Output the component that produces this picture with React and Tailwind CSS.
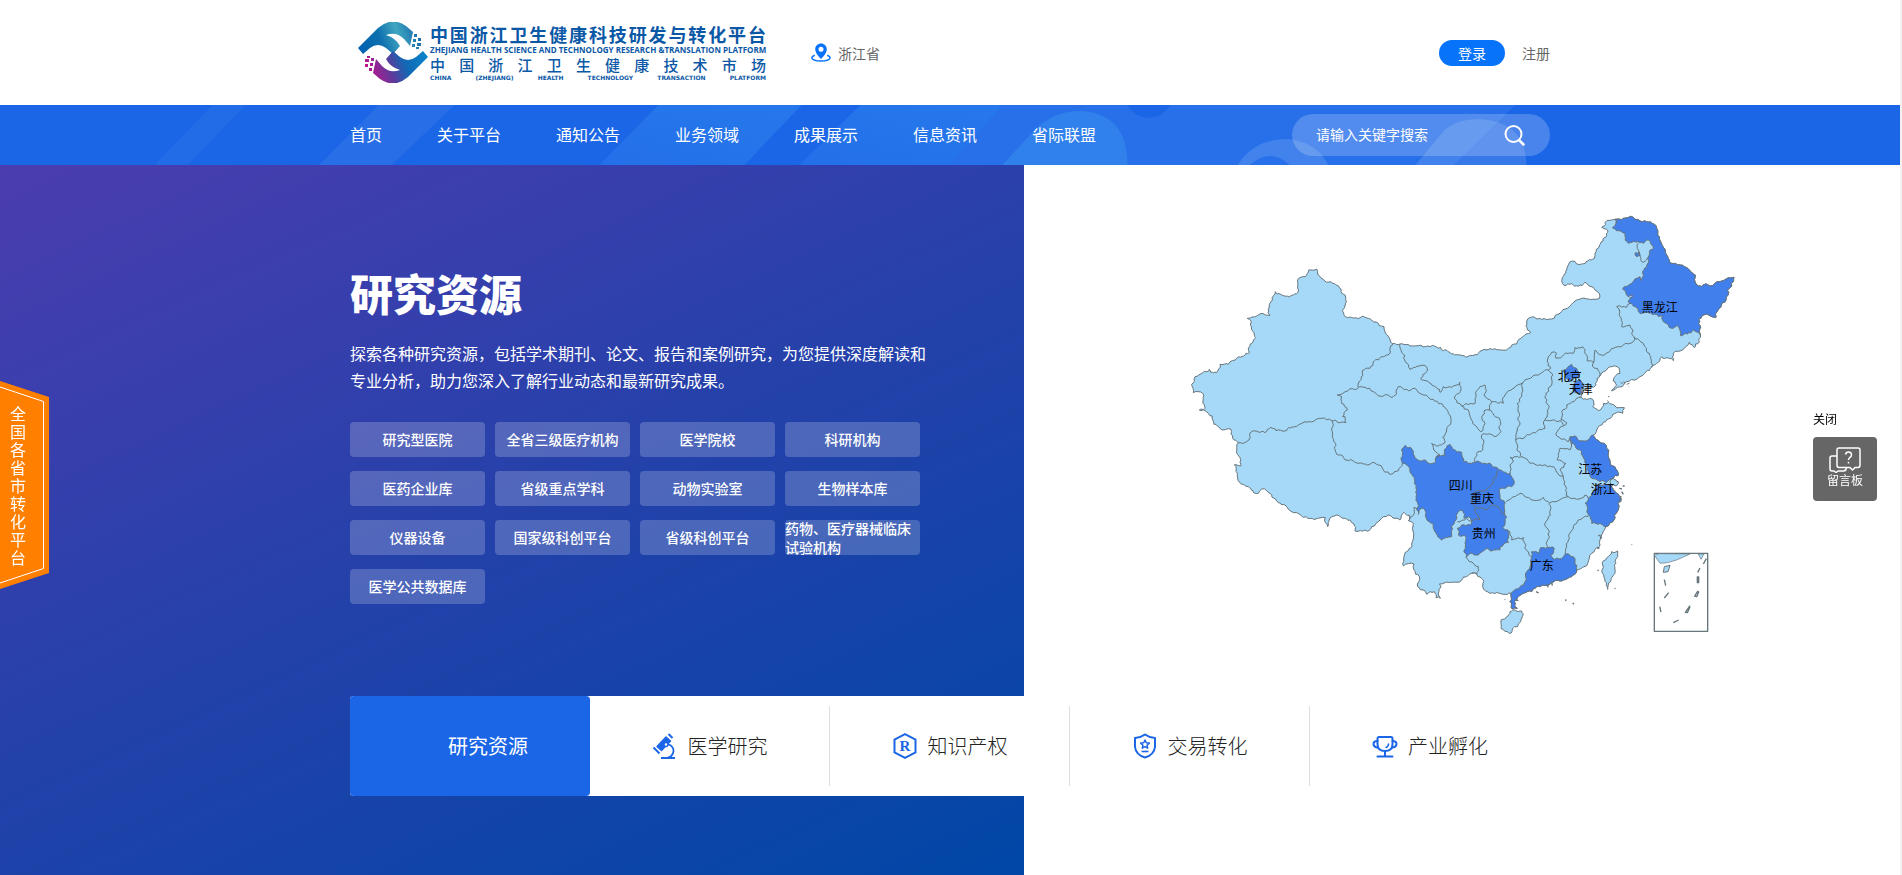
import React from 'react';

const OFFSETS = { A: [0, 0], B: [930, 0], C: [0, 690], D: [930, 690] };

/* Reads "x,y x,y ..." given in one of the four map tiles. */
function arc(tile, text) {
  const [ox, oy] = OFFSETS[tile];
  return text
    .trim()
    .split(/\s+/)
    .map((pair) => {
      const [x, y] = pair.split(',').map(Number);
      return [x + ox, y + oy];
    });
}

function noise(a, b) {
  const s = Math.sin(a[0] * 12.9898 + a[1] * 78.233 + b[0] * 37.719 + b[1] * 4.581) * 43758.5453;
  return s - Math.floor(s) - 0.5;
}

/* Splits a border segment so that it reads as a natural coast line. */
function split(a, b, out) {
  const dx = b[0] - a[0];
  const dy = b[1] - a[1];
  const length = Math.hypot(dx, dy);
  if (length > 9) {
    const forward = a[0] < b[0] || (a[0] === b[0] && a[1] < b[1]);
    const n = forward ? noise(a, b) : -noise(b, a);
    const k = (n * Math.min(length * 0.5, 9)) / length;
    const mid = [Math.round(((a[0] + b[0]) / 2 - dy * k) * 10) / 10, Math.round(((a[1] + b[1]) / 2 + dx * k) * 10) / 10];
    split(a, mid, out);
    split(mid, b, out);
  } else {
    out.push(b);
  }
}

function toPath(points, closed) {
  const out = [points[0]];
  for (let i = 1; i < points.length; i += 1) split(points[i - 1], points[i], out);
  if (closed) split(points[points.length - 1], points[0], out);
  return 'M' + out.map((p) => p.join(' ')).join('L') + (closed ? 'Z' : '');
}

const northWest = arc('A', '125,583 133,575 135,560 158,548 170,545 178,538 182,547 200,548 206,537 210,523 235,523 262,503 298,488 301,462 308,458 317,443 309,425 304,395 292,385 320,378 342,372 360,376 355,358 367,330 376,305 392,313 425,316 443,308 443,270 450,263 465,260 476,240 500,237 503,252 524,273 548,280 566,288 573,305 587,322 585,348 577,362 582,376 605,382 645,382 665,390 688,407 702,410 712,435 728,461 750,462 790,468 848,466 872,472 880,482 900,487 920,494 942,497 948,502 975,494');
const north = arc('B', '90,476 145,475 170,462 188,440 212,428 198,408 205,385 220,380 245,388 275,387 300,370 322,355 345,333 375,325 418,325 420,318 400,292 375,277 355,289 335,281 312,286 305,272 320,240 337,213 365,222 403,205 405,190 418,168 440,137 440,118 425,112 435,98 450,91');
const heilongjiangCoast = arc('B', '465,88 490,85 520,82 548,95 572,96 590,115 598,140 610,172 620,195 628,217 660,225 690,242 706,255 708,282 716,288 750,288 780,275 822,262 812,280 814,290 802,300 798,330 782,352 768,382 740,372 716,388 722,412 722,438');
const bohai = arc('B', '718,455 706,462 703,473 688,457 678,470 668,480 640,490 640,512 605,500 590,520 575,532 540,560 530,568 500,575 455,603 470,585 460,570 480,550 478,535 455,530 418,560 410,575 400,592 385,592 370,600 362,622 398,628 398,650 415,662 430,640 445,637 465,648 493,653 488,670 470,668 430,697 410,720');
const jiangsuCoast = arc('D', '400,45 433,70 445,100 452,135 472,152 476,165 460,175');
const shanghai = arc('D', '475,185 470,197');
const zhejiangCoast = arc('D', '452,193 460,210 475,222 483,235 474,250 472,275 462,300 438,320');
const fujianCoast = arc('D', '425,345 420,375 405,388 388,415 372,440');
const guangdongCoast = arc('D', '350,450 335,470 310,480 285,482 270,492 240,500 215,515 175,530 163,545 172,565 157,567 150,545 153,520');
const south = arc('D', '130,523 90,520 68,500 70,480 50,462 35,460');
const southWest = arc('C', '935,480 905,487 885,488 868,492 871,535 858,533 853,515 830,523 822,510 803,500 808,470 796,462 792,432 760,438 762,410 785,372 791,340 790,310 775,302 778,285 762,277 750,300 735,295 715,285 690,300 665,320 658,331 615,333 612,312 600,300 555,287 538,300 533,320 526,293 495,298 460,292 430,278 405,255 385,248 350,212 335,207 325,220 295,200 268,186 262,160 253,135 272,138 272,118 260,98 265,68');
const west = arc('A', '248,745 243,718 210,714 192,703 187,678 165,662 148,660 165,655 158,610 130,608');

const mainland = [northWest, north, heilongjiangCoast, bohai, jiangsuCoast, shanghai, zhejiangCoast, fujianCoast, guangdongCoast, south, southWest, west].flat();

const hainan = arc('D', '185,573 150,575 123,600 123,625 148,640 173,620 187,590');
const taiwan = arc('D', '473,393 455,395 428,435 427,460 443,508 452,485 465,450 473,410');

const darkRegions = [
  [...heilongjiangCoast, ...arc('B', '700,420 662,437 650,405 635,415 625,405 610,395 608,378 560,365 540,370 525,350 510,340 505,332 520,318 505,320 488,298 540,260 543,272 548,250 560,232 562,205 580,175 575,165 560,150 550,160 505,160 495,150 495,130 470,122 457,113 468,100')],
  [...jiangsuCoast, ...arc('D', '440,187 420,185 390,165 375,120 365,95 345,75 330,60 330,50 345,48 352,58 385,60')],
  [...zhejiangCoast, ...arc('D', '420,310 395,310 385,285 375,250 385,235 400,215 410,192 430,195')],
  [...guangdongCoast, ...arc('D', '180,500 195,485 200,455 213,430 215,395 235,400 240,385 262,383 283,385 272,405 283,418 310,410 315,403 340,410 345,425')],
  [
    ...arc('C', '757,130 755,92 765,76 782,82 793,108 815,123 825,120 840,132 855,128 858,110 885,108 888,85 900,73 910,88 935,97 940,125 955,130 975,127'),
    ...arc('D', '75,130 115,148 150,160 163,185 155,200 120,205 120,235 135,250 140,290 128,322 143,330 145,368 120,390 100,390 80,385 55,405 30,400 18,412 12,390 15,370 15,347'),
    ...arc('C', '925,345 922,325 935,315 960,315 965,305 960,292 942,295 938,272 925,275 918,300 903,318 905,350 875,360 862,345 848,310 830,297 828,278 815,265 805,283 800,265 798,230 793,178 775,140'),
  ],
  arc('B', '335,523 350,535 355,560 330,575 315,560 310,540'),
  arc('B', '355,570 368,580 362,612 345,608 338,590'),
  arc('B', '526,188 538,186 540,196 530,200'),
];

const borders = [
  [...arc('C', '265,68 290,65 305,35 345,38 362,22 378,32 405,33 440,20'), ...arc('A', '465,695 515,685 545,692 562,697 588,698 585,680 578,680 592,660 575,640 575,620 562,615 625,593 637,542 660,535 670,515 700,500 718,492 722,468 728,461')],
  [...arc('A', '545,692 548,710 547,740 553,775'), ...arc('C', '560,103 580,112 610,123 640,132 685,135 705,157 722,163 745,152 757,130')],
  [...arc('A', '625,593 645,592 670,605 680,613 725,622 740,612 745,590 770,598 795,595 820,615 850,628 885,652 895,670 903,695 890,720 878,742 883,760 865,768 845,760 850,772 870,795'), ...arc('C', '858,110')],
  [...arc('A', '750,462 765,497 765,515 780,538 825,527 830,545 812,565 845,585 870,607 880,590 905,592 930,577 933,595 913,625 935,648'), ...arc('B', '45,640 48,615 60,590 75,585 78,605 72,615 95,635 130,640 133,620 165,590 188,578 225,555 265,540')],
  [...arc('A', '935,648 955,660 968,700 992,725'), ...arc('B', '70,710 75,700 65,680 72,662 88,660 95,635')],
  [...arc('B', '88,660 120,690 123,725 100,738 65,735'), ...arc('D', '70,60 68,90 50,100 45,125')],
  [...arc('B', '188,578 185,610 172,640 178,670 172,720 167,748'), ...arc('D', '172,75 185,110 150,112 160,125 150,135 150,160')],
  arc('B', '265,540 278,555 275,585 255,620 268,650 255,690 255,715 215,730 167,750'),
  arc('B', '255,690 300,692 312,706'),
  arc('B', '265,540 272,535 262,515 275,487 290,490 288,505 310,495 340,490 345,473 368,470 375,490 382,513 402,515 405,480 425,495 460,475 520,455 522,440 515,430 510,405 485,410 478,360 470,350 500,352 510,340'),
  arc('B', '402,515 397,525 412,535 418,560'),
  arc('B', '522,440 550,460 568,490 575,532'),
  arc('B', '535,160 535,180 545,215 562,205'),
  arc('B', '465,88 468,100'),
  arc('B', '362,622 320,645 305,665 303,690 320,698 300,712 288,730 300,745 325,755 330,742'),
  arc('D', '185,110 210,130 270,138 300,168 310,172 318,225 325,230 270,248'),
  arc('D', '310,172 300,150 318,130 292,120 300,85 330,90 335,75 330,60'),
  arc('D', '138,245 160,230 180,220 200,232 240,240 250,232 268,248 272,285 255,310 265,345 265,383'),
  arc('D', '325,230 350,238 375,225 385,235'),
  arc('D', '385,290 355,300 340,320 325,360 318,385 315,403'),
  arc('D', '143,330 155,360 190,352 195,385 213,410'),
  arc('D', '18,412 28,425 55,440 50,462 35,460'),
  arc('C', '775,302 790,285 792,262 800,265'),
  arc('D', '-8,305 20,295 35,302 60,298 55,285 45,275 50,262 75,270 100,255 115,260 125,280 137,285'),
  arc('D', '50,262 35,240 45,215 75,212 95,195 110,170 115,148'),
  arc('D', '460,175 450,185 452,193'),
];

const labels = [
  ['黑龙江', 1529, 353],
  ['北京', 1259, 560],
  ['天津', 1292, 600],
  ['江苏', 1321, 839],
  ['浙江', 1358, 899],
  ['四川', 932, 886],
  ['重庆', 996, 926],
  ['贵州', 1001, 1031],
  ['广东', 1175, 1128],
];

function ChinaMap() {
  return (
    <svg viewBox="0 0 1872 1380" className="w-[624px] max-w-full" role="img" aria-label="中国地图">
      <g stroke="#66747b" strokeWidth="3" strokeLinejoin="round" fill="#a5d9f7">
        <path d={toPath(mainland, true)} />
        <path d={toPath(hainan, true)} />
        <path d={toPath(taiwan, true)} />
        <g fill="#417fec">
          {darkRegions.map((points, i) => (
            <path key={i} d={toPath(points, true)} />
          ))}
        </g>
        <g fill="none">
          {borders.map((points, i) => (
            <path key={i} d={toPath(points, false)} />
          ))}
        </g>
        <g transform="translate(930 690)">
          <rect x="583" y="400" width="160" height="234" fill="none" strokeWidth="4" />
          <path d="M583 406L597 401L690 402L650 420L622 428L600 430ZM715 402L732 402L723 418Z" strokeWidth="2" />
          <path d="M613 440L630 436L624 455L610 457Z" />
          <g fill="none" strokeWidth="4">
            <path d="M739 416L730 432M720 444L713 457M712 471V488H716V471ZM713 514L704 528L710 530L716 516ZM690 557L676 577L682 578L690 560M656 600L640 608M599 560L603 576M626 518L613 534M613 479L617 497" />
          </g>
          <path d="M478 205l8 2M488 198l6 0M478 228l7 3M476 240l8 -4M262 492l2 10M275 485l2 12M228 515l8 4M165 540l10 2M412 450l4 2M515 373l1 1M464 504l2 2M317 538l1 5M338 549l4 4M134 538l2 1M415 345l8 4M412 382l6 4M485 215l5 8M420 352l6 2" strokeWidth="4" />
        </g>
        <path d="M1420 575l6 4M1430 583l8 -3M1437 590l1 1M1374 620l4 0M1372 632l4 3M1412 578l6 2" />
      </g>
      <g fill="#000" fontSize="36" textAnchor="middle" className="font-['Noto_Sans_CJK_SC',sans-serif]">
        {labels.map(([name, x, y]) => (
          <text key={name} x={x} y={y + 13}>{name}</text>
        ))}
      </g>
    </svg>
  );
}

function Emblem() {
  const shape = 'M0 26L20 6Q34 -6 48 4L55 10L52 24L46 17Q38 9 28 13Q38 16 42 24L35 32L28 26Q20 20 12 26L5 32Z';
  const dots = 'M56 12h3v3h-3zM60 16h3v3h-3zM55 17h3v3h-3zM59 21h4v3h-4zM54 22h3v3h-3zM58 25h3v2h-3z';
  return (
    <svg viewBox="0 0 70 61" className="h-[61px] w-[70px] shrink-0" aria-hidden="true">
      <defs>
        <linearGradient id="emblem-top" x1="0" y1="0.6" x2="1" y2="0.4">
          <stop offset="0" stopColor="#0062b1" />
          <stop offset="0.35" stopColor="#0e6fae" />
          <stop offset="0.65" stopColor="#3fa5c0" />
          <stop offset="1" stopColor="#1465ac" />
        </linearGradient>
        <linearGradient id="emblem-bottom" x1="0" y1="0.6" x2="1" y2="0.4">
          <stop offset="0" stopColor="#0a83c9" />
          <stop offset="0.35" stopColor="#1268b4" />
          <stop offset="0.6" stopColor="#5a3c9c" />
          <stop offset="1" stopColor="#c8108c" />
        </linearGradient>
      </defs>
      <path d={shape + dots} fill="url(#emblem-top)" />
      <path d={shape + dots} fill="url(#emblem-bottom)" transform="rotate(180 35 30.5)" />
    </svg>
  );
}

function NavPattern() {
  return (
    <svg viewBox="0 0 1901 60" preserveAspectRatio="xMidYMid slice" className="h-[60px] w-full [grid-area:1/1]" aria-hidden="true">
      <defs>
        <linearGradient id="nav-fade" x1="0" x2="1" y1="1" y2="0">
          <stop offset="0" stopColor="#3a8cf4" stopOpacity="0.25" />
          <stop offset="1" stopColor="#2f8af0" stopOpacity="0.5" />
        </linearGradient>
      </defs>
      <path d="M213 0H246L188 60H155Z" fill="#fff" opacity="0.04" />
      <path d="M379 0H455L392 60H320Z" fill="#fff" opacity="0.06" />
      <path d="M659 0H802L745 60H600Z" fill="url(#nav-fade)" />
      <path d="M861 0H1003L951 60H800Z" fill="url(#nav-fade)" />
      <path d="M1003 0H1128Q1136 13 1149 13Q1162 13 1171 0H1516L1454 60H951Z" fill="#3a80f0" opacity="0.4" />
      <path d="M1003 60L1035 25Q1054 6 1080 6Q1128 8 1128 60Z" fill="#3f9af0" opacity="0.4" />
      <path d="M1238 60Q1255 34 1287 34Q1316 36 1329 60H1290Q1272 42 1250 60Z" fill="#fff" opacity="0.13" />
      <path d="M1416 60L1445 25Q1458 14 1479 14Q1526 16 1527 60Z" fill="#fff" opacity="0.13" />
    </svg>
  );
}

function MicroscopeIcon() {
  return (
    <svg viewBox="0 0 26 26" className="size-[26px]" aria-hidden="true" fill="none" stroke="#1b66e6">
      <path d="M14 4L18.500 8L9.500 17.500L5 13.500Z" fill="#1b66e6" strokeWidth="1.500" strokeLinejoin="round" />
      <path d="M16.500 1L20.500 5" strokeWidth="2" />
      <path d="M1.500 14.500L7.500 20.500" strokeWidth="2" />
      <path d="M16 11Q22 13.500 21.500 18.500Q20.500 24 15 25" strokeWidth="1.800" />
      <path d="M9 25H23" strokeWidth="2" />
      <circle cx="14" cy="11.500" r="2" fill="#fff" strokeWidth="1.500" />
    </svg>
  );
}

function RegisteredIcon() {
  return (
    <svg viewBox="0 0 26 26" className="size-[26px]" aria-hidden="true">
      <path d="M13 1.200L23.500 6.500V19.500L13 24.800L2.500 19.500V6.500Z" fill="none" stroke="#1b66e6" strokeWidth="2" />
      <text x="13" y="18" textAnchor="middle" fontSize="15" fill="#1b66e6" className="font-['Liberation_Serif',serif] font-bold">R</text>
    </svg>
  );
}

function ShieldIcon() {
  return (
    <svg viewBox="0 0 26 26" className="size-[26px]" aria-hidden="true" fill="none" stroke="#1b66e6" strokeLinejoin="round">
      <path d="M13 1.500Q17 4.500 23 5V14Q22 22 13 24.500Q4 22 3 14V5Q9 4.500 13 1.500Z" strokeWidth="2" />
      <path d="M13 7L14.300 9.800L17.300 10.100L15 12.200L15.700 15.200L13 13.700L10.300 15.200L11 12.200L8.700 10.100L11.700 9.800Z" strokeWidth="1.500" />
      <path d="M9.500 18.500H16.500" strokeWidth="1.600" />
    </svg>
  );
}

function TrophyIcon() {
  return (
    <svg viewBox="0 0 26 26" className="size-[26px]" aria-hidden="true" fill="none" stroke="#1b66e6" strokeWidth="2" strokeLinecap="round" strokeLinejoin="round">
      <path d="M7 4H19Q20.500 4 20.500 6V11Q20.500 18 13 18Q5.500 18 5.500 11V6Q5.500 4 7 4Z" />
      <path d="M5.500 8Q1.500 8 1.500 11Q2 14.500 6 14.500M20.500 8Q24.500 8 24.500 11Q24 14.500 20 14.500M13 18V23M5.500 23.500H20.500" />
      <path d="M16.500 11Q16.500 13.500 14 14.500" strokeWidth="1.500" />
    </svg>
  );
}

function PinIcon() {
  return (
    <svg viewBox="0 0 20 19" className="h-[19px] w-5" aria-hidden="true">
      <path fillRule="evenodd" fill="#0673fa" d="M10 0.500C13.300 0.500 15.800 3 15.800 6.200C15.800 9 13.500 12.500 10 16C6.500 12.500 4.200 9 4.200 6.200C4.200 3 6.700 0.500 10 0.500ZM10 3.700A2.500 2.500 0 1 0 10 8.700A2.500 2.500 0 1 0 10 3.700Z" />
      <path d="M3.800 12.200Q0.800 13.500 0.800 14.800Q1.500 17.800 10 18Q18.500 17.800 19.200 14.800Q19.200 13.500 16.200 12.200" fill="none" stroke="#0673fa" strokeWidth="1.500" />
    </svg>
  );
}

const navItems = ['首页', '关于平台', '通知公告', '业务领域', '成果展示', '信息资讯', '省际联盟'];

const resources = ['研究型医院', '全省三级医疗机构', '医学院校', '科研机构', '医药企业库', '省级重点学科', '动物实验室', '生物样本库', '仪器设备', '国家级科创平台', '省级科创平台', '药物、医疗器械临床试验机构', '医学公共数据库'];

const tabs = [
  ['医学研究', MicroscopeIcon],
  ['知识产权', RegisteredIcon],
  ['交易转化', ShieldIcon],
  ['产业孵化', TrophyIcon],
];

export default function App() {
  return (
    <div className="border-r-2 border-[#f2f2f2] bg-white font-['Noto_Sans_CJK_SC',sans-serif] text-[#333]">
      <header className="mx-auto flex h-[105px] max-w-[1200px] items-center">
        <a href="#" className="ml-2 flex items-center gap-0.5">
          <Emblem />
          <span className="flex w-[336px] flex-col text-[#0b58a6] [text-align-last:justify]">
            <span className="text-[18px] leading-[20px] font-bold">中国浙江卫生健康科技研发与转化平台</span>
            <span className="font-['Open_Sans',sans-serif] text-[8px] leading-[12px] font-bold whitespace-nowrap">ZHEJIANG HEALTH SCIENCE AND TECHNOLOGY RESEARCH &amp;TRANSLATION PLATFORM</span>
            <span className="text-[15px] leading-[18px] font-medium">中国浙江卫生健康技术市场</span>
            <span className="font-['DejaVu_Sans',sans-serif] text-[6px] leading-[8px] font-bold whitespace-nowrap">CHINA (ZHEJIANG) HEALTH TECHNOLOGY TRANSACTION PLATFORM</span>
          </span>
        </a>
        <a href="#" className="ml-[45px] flex items-center gap-[7px] text-sm text-[#666]">
          <PinIcon />
          浙江省
        </a>
        <div className="ml-auto flex items-center gap-[17px] text-sm">
          <button type="button" className="h-[26px] w-[66px] rounded-full bg-[#0673fa] text-white">登录</button>
          <a href="#" className="text-[#666]">注册</a>
        </div>
      </header>

      <nav className="grid overflow-hidden bg-[#1b66e6]">
        <NavPattern />
        <div className="z-10 mx-auto flex w-full max-w-[1200px] items-center justify-between [grid-area:1/1]">
          <ul className="flex gap-[55px] pb-0.5 text-base text-white">
            {navItems.map((item) => (
              <li key={item}><a href="#" className="whitespace-nowrap">{item}</a></li>
            ))}
          </ul>
          <form className="flex h-[42px] w-[258px] items-center rounded-full bg-white/20 pr-[25px] pl-6" onSubmit={(e) => e.preventDefault()}>
            <input type="text" aria-label="搜索" placeholder="请输入关键字搜索" className="min-w-0 flex-1 bg-transparent pb-0.5 text-sm text-white outline-none placeholder:text-white" />
            <button type="submit" aria-label="搜索">
              <svg viewBox="0 0 21 21" className="size-[21px]" fill="none" stroke="#fff" strokeWidth="2" strokeLinecap="round" aria-hidden="true">
                <circle cx="9.500" cy="9" r="8" />
                <path d="M15.500 15.500L19.500 19.500" strokeWidth="2.500" />
              </svg>
            </button>
          </form>
        </div>
      </nav>

      <main className="grid">
        <div className="flex [grid-area:1/1]">
          <div className="w-[53.9%] bg-[linear-gradient(155deg,#4b3db0_0%,#2441aa_50%,#0047a6_100%)]" />
          <div className="flex flex-1 justify-center pt-[25px]">
            <div><ChinaMap /></div>
          </div>
        </div>
        <div className="z-10 mx-auto w-full max-w-[1200px] pt-[97px] pb-[79px] [grid-area:1/1]">
          <div className="w-[580px] text-white">
            <h1 className="text-[43px] leading-[60px] font-black">研究资源</h1>
            <p className="mt-[18px] text-base leading-[27px]">探索各种研究资源，包括学术期刊、论文、报告和案例研究，为您提供深度解读和专业分析，助力您深入了解行业动态和最新研究成果。</p>
            <div className="mt-7 grid w-[570px] grid-cols-4 gap-x-2.5 gap-y-3.5">
              {resources.map((name) => (
                <a key={name} href="#" className="flex h-[35px] items-center justify-center rounded bg-white/20 text-sm leading-[19px] font-medium">
                  {name}
                </a>
              ))}
            </div>
          </div>
          <div className="mt-[92px] grid h-[100px] grid-cols-5 rounded bg-white text-xl">
            <button type="button" className="flex items-center justify-center rounded bg-[#1b66e6] pl-9 text-white">研究资源</button>
            {tabs.map(([name, Icon], i) => (
              <button
                key={name}
                type="button"
                className={'my-2.5 flex items-center justify-center gap-2.5 font-light text-[#222] ' + (i < 3 ? 'border-r border-[#ddd]' : '')}
              >
                <Icon />
                {name}
              </button>
            ))}
          </div>
        </div>
      </main>

      <a href="#" className="fixed top-[381px] left-0 z-20 grid h-[208px] w-[49px]">
        <svg viewBox="0 0 49 208" className="h-[208px] w-[49px] [grid-area:1/1]" aria-hidden="true">
          <path d="M0 0L49 16V192L0 208Z" fill="#ff7f00" />
          <path d="M0 6L43.500 20.500V187.500L0 202" fill="none" stroke="#fff" strokeWidth="1" />
        </svg>
        <span className="z-10 ml-2.5 w-4 self-center text-base leading-[18px] text-white [grid-area:1/1]">全国各省市转化平台</span>
      </a>

      <aside className="fixed top-[408px] right-[25px] z-20 w-16 text-xs">
        <button type="button" className="block h-[29px] pb-2 leading-5 text-black">关闭</button>
        <a href="#" className="flex h-16 flex-col items-center rounded bg-[#666] pt-2.5 text-white">
          <svg viewBox="0 0 32 26" className="h-[26px] w-8" fill="none" stroke="#fff" strokeWidth="1.500" strokeLinejoin="round" aria-hidden="true">
            <path d="M10 1H29Q31 1 31 3V18Q31 20.500 29 20.500H26L23.500 23L21 20.500H10Q8 20.500 8 18V3Q8 1 10 1Z" />
            <path d="M8 9H3Q1 9 1 11V22Q1 24 3 24H5L7 25.500L9 24H15Q17 23.500 17.500 21" />
            <path d="M16.500 7.500Q17 5 19.500 5Q22.500 5 22.500 8Q22.500 9.500 20.800 10.500Q19.500 11.500 19.500 13M19.500 14.800V16.500" />
          </svg>
          <span className="leading-[14px]">留言板</span>
        </a>
      </aside>
    </div>
  );
}
